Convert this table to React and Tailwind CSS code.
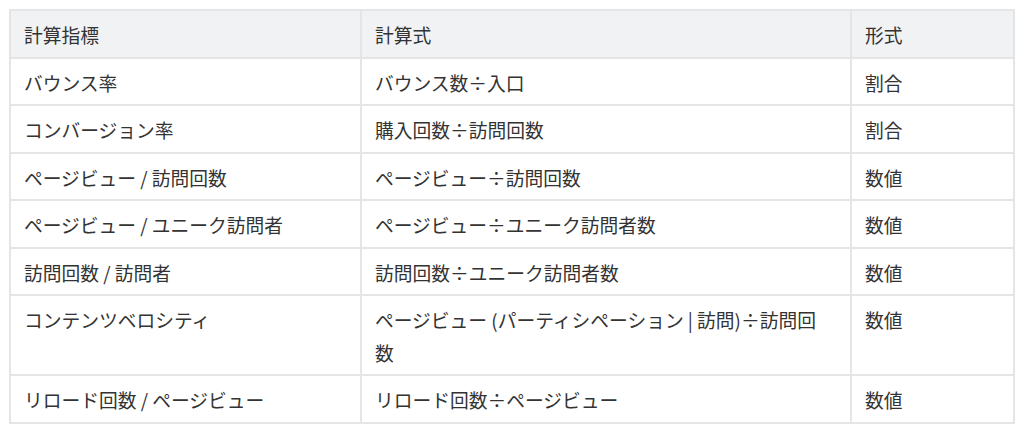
import React from 'react';

const rows = [
  ['バウンス率', 'バウンス数÷入口', '割合'],
  ['コンバージョン率', '購入回数÷訪問回数', '割合'],
  ['ページビュー / 訪問回数', 'ページビュー÷訪問回数', '数値'],
  ['ページビュー / ユニーク訪問者', 'ページビュー÷ユニーク訪問者数', '数値'],
  ['訪問回数 / 訪問者', '訪問回数÷ユニーク訪問者数', '数値'],
  ['コンテンツベロシティ', 'ページビュー (パーティシペーション | 訪問)÷訪問回数', '数値'],
  ['リロード回数 / ページビュー', 'リロード回数÷ページビュー', '数値'],
];

const cell = 'border-2 border-[#e4e5e7] pl-[13px] pr-[22px] pt-[8px] pb-[5px] leading-[32.5px] align-top font-normal text-left';

const App = () => {
  return (
    <div className="bg-white w-[1024px] h-[432px] p-[9px] font-['Noto_Sans_CJK_JP','Noto_Sans',sans-serif] text-[18.75px] text-[#333333]">
      <table className="w-[1006px] table-fixed border-collapse">
        <colgroup>
          <col className="w-[351px]" />
          <col className="w-[490px]" />
          <col />
        </colgroup>
        <thead>
          <tr className="bg-[#f1f2f3]">
            <th className={cell}>計算指標</th>
            <th className={cell}>計算式</th>
            <th className={cell}>形式</th>
          </tr>
        </thead>
        <tbody>
          {rows.map((r, i) => (
            <tr key={i}>
              {r.map((c, j) => (
                <td key={j} className={cell}>{c}</td>
              ))}
            </tr>
          ))}
        </tbody>
      </table>
    </div>
  );
};

export default App;
